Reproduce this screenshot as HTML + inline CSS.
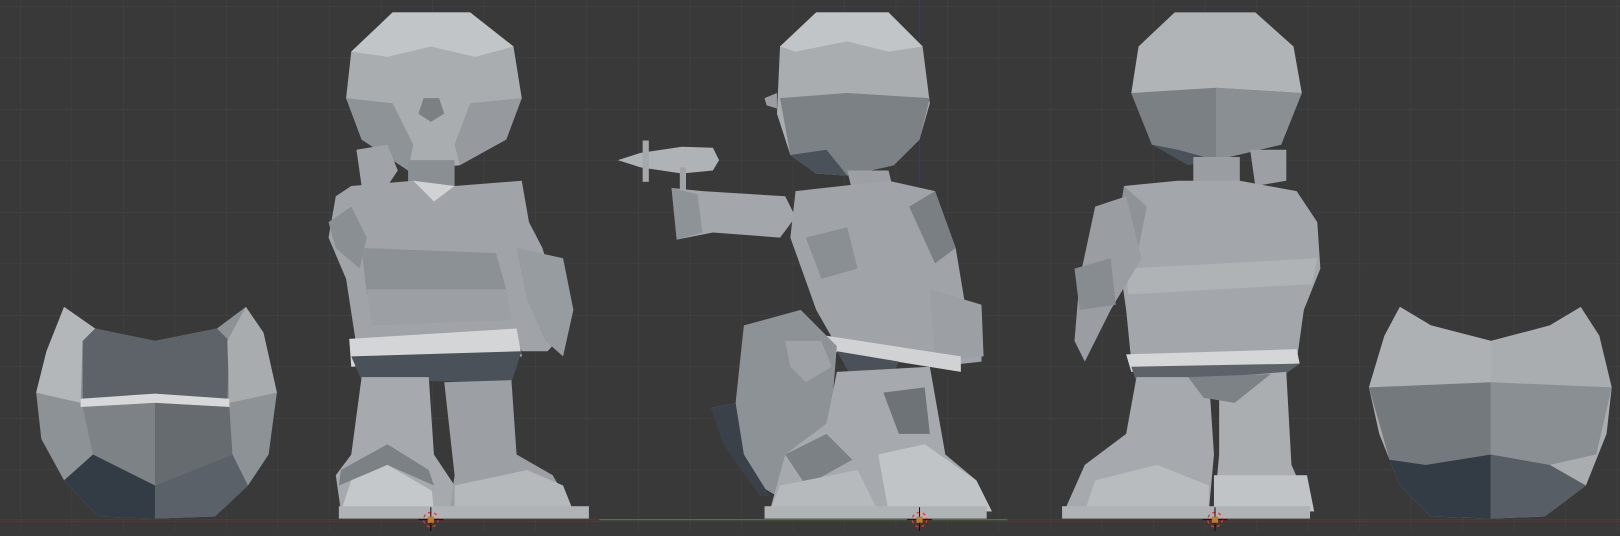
<!DOCTYPE html><html><head><style>body{margin:0;width:1620px;height:531px;overflow:hidden;background:#393939}</style></head><body>
<svg width="1620" height="531" viewBox="0 0 1568 514" preserveAspectRatio="none" xmlns="http://www.w3.org/2000/svg">
<defs><pattern id="g" x="19.4" y="5.8" width="49.85" height="49.85" patternUnits="userSpaceOnUse"><path d="M0 0H50M0 0V50" stroke="#424242" stroke-width="1.2" fill="none"/></pattern></defs>
<rect width="1568" height="514" fill="#393939"/><rect width="1568" height="514" fill="url(#g)"/>
<line x1="0" y1="503" x2="1568" y2="503" stroke="#8a2020" stroke-width="1.3"/>
<line x1="580" y1="503" x2="975" y2="503" stroke="#2a8a2a" stroke-width="1.3"/>
<line x1="890" y1="0" x2="890" y2="178" stroke="#3030b0" stroke-width="1.2"/>
<!-- left helmet -->
<polygon points="62,297 92,318 150,330 210,318 238,297 255,322 268,380 260,440 240,470 208,500 150,502 95,500 62,465 40,425 35,380 45,340" fill="#8d9296"/>
<polygon points="92,318 150,330 210,318 222,330 220,390 150,385 80,390 80,330" fill="#5d6369"/>
<polygon points="62,297 92,318 80,330 78,390 35,380 45,340" fill="#b3b7ba"/>
<polygon points="238,297 255,322 268,380 222,390 220,330" fill="#a8acaf"/>
<polygon points="78,386 150,381 222,386 222,394 150,390 78,394" fill="#d6d8da"/>
<polygon points="80,394 150,390 150,470 90,440" fill="#7d8286"/>
<polygon points="150,390 222,394 225,440 150,470" fill="#666b70"/>
<polygon points="62,465 90,440 150,470 150,502 95,500" fill="#333b44"/>
<polygon points="150,470 225,440 240,470 208,500 150,502" fill="#5b6168"/>
<!-- front figure head -->
<polygon points="380,12 455,12 497,45 505,95 490,135 445,160 395,165 350,135 335,95 340,50" fill="#a9adb0"/>
<polygon points="380,12 455,12 497,45 460,55 417,45 375,55 340,50" fill="#c2c5c7"/>
<polygon points="335,95 380,100 400,140 395,165 350,135" fill="#8e9397"/>
<polygon points="505,95 455,100 440,140 445,160 490,135" fill="#969a9e"/>
<polygon points="410,95 425,95 430,110 417,118 405,110" fill="#7b8084"/>
<polygon points="345,145 375,140 385,165 375,180 350,180" fill="#a0a4a8"/>
<rect x="395" y="155" width="45" height="25" fill="#8a8f93"/>
<!-- front torso -->
<polygon points="340,180 400,175 440,180 505,175 512,215 525,240 540,290 548,320 530,340 505,340 500,330 345,335 335,270 318,230 325,190" fill="#a0a4a8"/>
<polygon points="400,175 440,180 420,195" fill="#d0d2d4"/>
<polygon points="318,215 340,200 355,230 348,260 325,240" fill="#8a8f93"/>
<polygon points="350,240 480,245 490,280 355,285" fill="#8c9195"/>
<polygon points="355,280 490,280 495,310 360,315" fill="#9ca0a4"/>
<polygon points="500,240 545,250 555,300 545,345 528,330 510,290" fill="#979ca0"/>
<polygon points="338,328 500,318 505,345 340,355" fill="#d3d5d7"/>
<polygon points="340,345 505,340 495,370 350,368" fill="#4a5159"/>
<!-- front legs -->
<polygon points="350,365 415,365 420,440 440,470 445,495 330,495 325,460 340,440" fill="#a6aaae"/>
<polygon points="430,370 495,368 500,440 535,460 555,495 435,495 440,460" fill="#9ca0a4"/>
<polygon points="330,455 375,430 415,455 420,470 375,450 328,470" fill="#7c8185"/>
<polygon points="330,495 340,465 375,450 418,475 420,495" fill="#c5c8ca"/>
<polygon points="440,470 510,455 545,470 555,495 440,495" fill="#b6b9bc"/>
<rect x="328" y="490" width="242" height="12" fill="#b0b3b6"/>
<!-- side figure gun + arm -->
<polygon points="598,155 620,148 660,142 690,143 696,155 690,165 660,168 620,162" fill="#b0b3b6"/>
<rect x="622" y="136" width="6" height="40" fill="#a5a9ac"/>
<rect x="658" y="162" width="6" height="25" fill="#a0a4a8"/>
<polygon points="650,182 680,185 760,190 770,210 755,230 690,225 655,232" fill="#a3a7ab"/>
<polygon points="650,182 675,188 680,225 655,232" fill="#8e9397"/>
<!-- side head -->
<polygon points="790,12 860,12 893,45 900,100 890,135 865,160 820,170 790,168 765,150 752,110 755,45" fill="#a9adb0"/>
<polygon points="790,12 860,12 893,45 860,50 820,40 770,50 755,45" fill="#c2c5c7"/>
<polygon points="755,95 820,90 900,95 890,135 865,160 820,170 790,168 765,150" fill="#7c8185"/>
<polygon points="765,150 800,145 820,170 790,168" fill="#4a5159"/>
<polygon points="740,95 752,90 752,105 742,102" fill="#9a9ea2"/>
<polygon points="820,165 860,165 865,185 825,185" fill="#9ca0a4"/>
<!-- side torso -->
<polygon points="770,185 860,175 905,185 925,240 935,300 950,305 950,350 905,355 810,335 790,300 765,230" fill="#a0a4a8"/>
<polygon points="880,200 905,185 925,240 905,255" fill="#7a7f83"/>
<polygon points="780,230 820,220 830,260 795,270" fill="#8a8f93"/>
<polygon points="900,280 950,295 952,345 905,350" fill="#9ca0a4"/>
<polygon points="800,325 930,345 930,360 805,340" fill="#d0d2d4"/>
<polygon points="810,340 870,350 855,380 830,375" fill="#4a5159"/>
<!-- shield -->
<polygon points="720,315 775,300 810,335 800,460 760,485 735,470 700,420 688,395 712,390" fill="#8d9296"/>
<polygon points="760,330 795,330 805,355 780,370 765,355" fill="#9fa3a7"/>
<polygon points="688,395 712,390 720,440 745,480 735,480 700,430" fill="#3a4149"/>
<!-- side legs -->
<polygon points="810,360 900,355 915,440 945,465 960,495 745,495 760,440 800,410" fill="#a6aaae"/>
<polygon points="760,440 800,420 825,445 780,470" fill="#7c8185"/>
<polygon points="850,440 895,430 945,465 960,495 860,495" fill="#c1c4c6"/>
<polygon points="755,470 830,455 850,495 745,495" fill="#b7babd"/>
<polygon points="855,380 895,375 900,420 870,420" fill="#6e7377"/>
<rect x="740" y="490" width="215" height="12" fill="#b0b3b6"/>
<!-- back head -->
<polygon points="1137,12 1215,12 1252,45 1260,90 1240,140 1177,155 1115,140 1095,90 1102,45" fill="#b1b4b7"/>
<polygon points="1095,90 1177,85 1260,90 1240,140 1177,155 1115,140" fill="#7b8084"/>
<polygon points="1177,85 1260,90 1240,140 1177,155" fill="#8a8f93"/>
<polygon points="1115,140 1140,145 1177,155 1150,160" fill="#4a5159"/>
<polygon points="1210,145 1245,145 1245,175 1215,180" fill="#9ca0a4"/>
<rect x="1155" y="152" width="45" height="25" fill="#9a9ea2"/>
<!-- back torso -->
<polygon points="1088,180 1140,175 1200,175 1255,185 1275,215 1278,260 1262,300 1255,350 1095,350 1090,300 1080,230" fill="#a3a7ab"/>
<polygon points="1090,260 1275,250 1270,275 1092,285" fill="#b0b3b6"/>
<polygon points="1088,180 1110,200 1100,250 1080,230" fill="#8e9397"/>
<polygon points="1060,200 1090,190 1105,250 1075,300 1060,330 1050,350 1040,330 1045,270" fill="#9a9ea2"/>
<polygon points="1040,260 1075,250 1080,295 1045,300" fill="#878c90"/>
<polygon points="1090,343 1255,338 1258,352 1095,360" fill="#d4d6d8"/>
<polygon points="1095,355 1258,352 1240,365 1100,370" fill="#5c6268"/>
<!-- back legs -->
<polygon points="1100,365 1170,365 1175,440 1170,495 1030,495 1050,450 1090,420" fill="#a6aaae"/>
<polygon points="1180,365 1245,360 1250,450 1270,495 1175,495 1180,440" fill="#aaaeb1"/>
<polygon points="1150,365 1230,362 1195,390 1165,385" fill="#7d8286"/>
<polygon points="1060,465 1120,450 1170,470 1170,495 1050,495" fill="#b9bcbf"/>
<polygon points="1175,460 1265,460 1272,495 1175,495" fill="#c1c4c6"/>
<rect x="1028" y="490" width="240" height="12" fill="#b0b3b6"/>
<!-- right helmet -->
<polygon points="1355,297 1385,315 1443,330 1500,315 1530,297 1548,325 1560,375 1555,420 1535,470 1495,500 1443,502 1385,500 1355,470 1335,420 1325,375 1340,325" fill="#a9adb0"/>
<polygon points="1443,330 1443,375 1325,375 1340,325 1355,297 1385,315" fill="#adb1b4"/>
<polygon points="1325,375 1443,370 1443,440 1380,450 1345,445" fill="#74797d"/>
<polygon points="1443,370 1560,375 1545,440 1500,450 1443,440" fill="#8a8f93"/>
<polygon points="1345,445 1380,450 1443,440 1443,502 1385,500 1355,470" fill="#333b44"/>
<polygon points="1443,440 1500,450 1535,470 1495,500 1443,502" fill="#585e65"/>
<!-- cursors -->
<g fill="none" stroke="#e33" stroke-width="1.3" stroke-dasharray="3 3"><circle cx="417" cy="503" r="7"/><circle cx="890" cy="503" r="7"/><circle cx="1176" cy="503" r="7"/></g>
<g stroke="#111" stroke-width="1"><line x1="405" y1="503" x2="429" y2="503"/><line x1="417" y1="491" x2="417" y2="514"/><line x1="878" y1="503" x2="902" y2="503"/><line x1="890" y1="491" x2="890" y2="514"/><line x1="1164" y1="503" x2="1188" y2="503"/><line x1="1176" y1="491" x2="1176" y2="514"/></g>
<g fill="#c8782a"><rect x="414" y="500" width="6" height="6"/><rect x="887" y="500" width="6" height="6"/><rect x="1173" y="500" width="6" height="6"/></g>
</svg></body></html>
